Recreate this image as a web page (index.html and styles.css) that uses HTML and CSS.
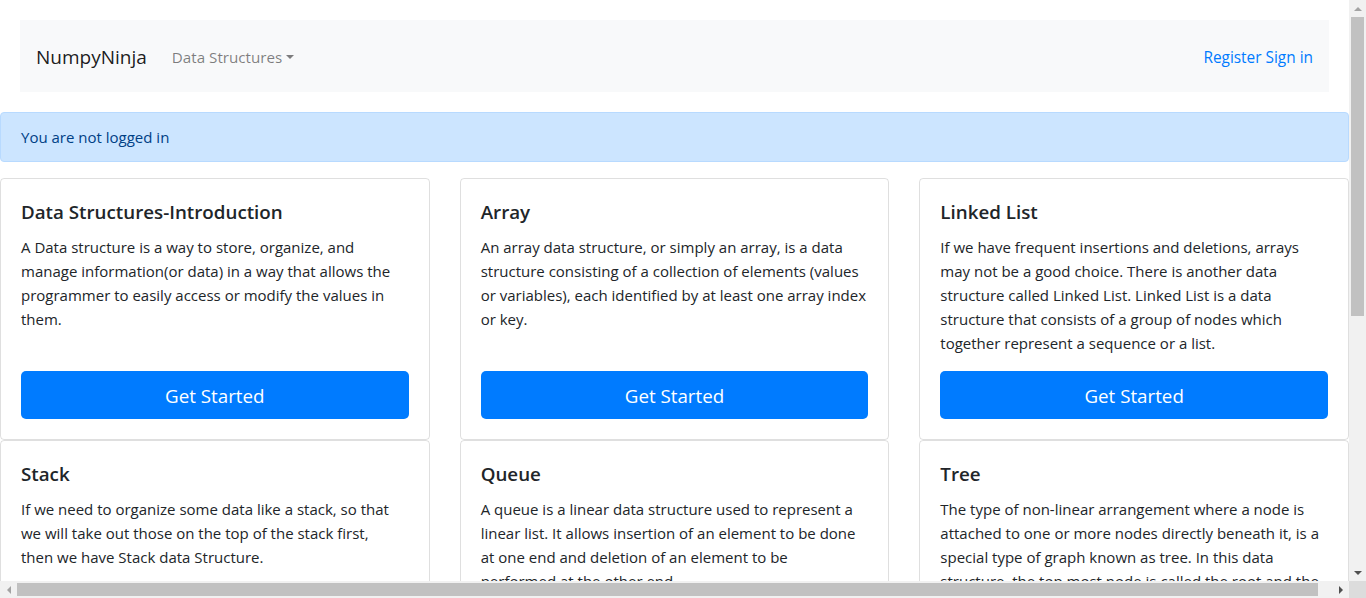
FILE: index.html
```html
<!DOCTYPE html>
<html lang="en">
<head>
<meta charset="utf-8">
<title>NumpyNinja</title>
<link rel="stylesheet" href="styles.css">
</head>
<body>
<div class="page">
  <nav class="navbar">
    <a class="brand" href="#">NumpyNinja</a>
    <a class="nav-link" href="#">Data Structures<span class="caret"></span></a>
    <div class="nav-right"><a href="#">Register</a> <a href="#">Sign in</a></div>
  </nav>

  <div class="alert">You are not logged in</div>

  <div class="grid">
    <div class="card">
      <h5>Data Structures-Introduction</h5>
      <p>A Data structure is a way to store, organize, and manage information(or data) in a way that allows the programmer to easily access or modify the values in them.</p>
      <a class="btn" href="#">Get Started</a>
    </div>
    <div class="card">
      <h5>Array</h5>
      <p>An array data structure, or simply an array, is a data structure consisting of a collection of elements (values or variables), each identified by at least one array index or key.</p>
      <a class="btn" href="#">Get Started</a>
    </div>
    <div class="card">
      <h5>Linked List</h5>
      <p>If we have frequent insertions and deletions, arrays may not be a good choice. There is another data structure called Linked List. Linked List is a data structure that consists of a group of nodes which together represent a sequence or a list.</p>
      <a class="btn" href="#">Get Started</a>
    </div>
    <div class="card">
      <h5>Stack</h5>
      <p>If we need to organize some data like a stack, so that we will take out those on the top of the stack first,<br>then we have Stack data Structure.</p>
      <a class="btn" href="#">Get Started</a>
    </div>
    <div class="card">
      <h5>Queue</h5>
      <p>A queue is a linear data structure used to represent a linear list. It allows insertion of an element to be done at one end and deletion of an element to be<br>performed at the other end.</p>
      <a class="btn" href="#">Get Started</a>
    </div>
    <div class="card">
      <h5>Tree</h5>
      <p>The type of non-linear arrangement where a node is attached to one or more nodes directly beneath it, is a special type of graph known as tree. In this data structure, the top most node is called the root and the bottom most nodes are called leaves.</p>
      <a class="btn" href="#">Get Started</a>
    </div>
  </div>
</div>

<div class="vscroll">
  <span class="arrow arrow-up"></span>
  <div class="vtrack"><div class="vthumb"></div></div>
  <span class="arrow arrow-down"></span>
</div>
<div class="hscroll">
  <span class="arrow arrow-left"></span>
  <div class="htrack"><div class="hthumb"></div></div>
  <span class="arrow arrow-right"></span>
</div>
<div class="corner"></div>
</body>
</html>
```

FILE: styles.css
```css
html, body {
  margin: 0;
  padding: 0;
}

body {
  overflow: hidden;
  font-family: "Open Sans", "Noto Sans", sans-serif;
  font-size: 15px;
  line-height: 24px;
  color: #212529;
  background: #fff;
}

a {
  text-decoration: none;
}

.page {
  width: 1349px;
}

/* navbar */
.navbar {
  margin: 20px 20px 0;
  height: 72px;
  box-sizing: border-box;
  padding: 0 16px;
  display: flex;
  align-items: center;
  background: #f8f9fa;
}

.brand {
  font-size: 19px;
  line-height: 30px;
  padding-top: 1px;
  color: rgba(0, 0, 0, 0.9);
  margin-right: 17px;
}

.nav-link {
  padding: 1px 8px 0;
  font-size: 15.2px;
  color: rgba(0, 0, 0, 0.5);
}

.caret {
  display: inline-block;
  margin-left: 4px;
  vertical-align: 4px;
  border-top: 4.5px solid rgba(0, 0, 0, 0.5);
  border-left: 4px solid transparent;
  border-right: 4px solid transparent;
}

.nav-right {
  margin-left: auto;
  padding-top: 3px;
  font-size: 15.4px;
}

.nav-right a {
  color: #007bff;
}

/* alert */
.alert {
  margin: 20px 0 16px;
  padding: 12px 20px;
  border: 1px solid #b8daff;
  border-radius: 4px;
  background: #cce5ff;
  color: #004085;
}

/* cards */
.grid {
  display: grid;
  grid-template-columns: repeat(3, 1fr);
  column-gap: 30px;
}

.card {
  display: flex;
  flex-direction: column;
  padding: 20px;
  border: 1px solid rgba(0, 0, 0, 0.125);
  border-radius: 4px;
}

.card h5 {
  margin: 0 0 11px;
  padding-top: 1px;
  font-size: 18.75px;
  line-height: 24px;
  font-weight: 600;
}

.card p {
  margin: 0 0 16px;
}

.btn {
  margin-top: auto;
  display: block;
  height: 48px;
  box-sizing: border-box;
  padding-top: 1px;
  line-height: 47px;
  text-align: center;
  font-size: 18.75px;
  color: #fff;
  background: #007bff;
  border-radius: 5px;
}

/* fake scrollbars */
.vscroll {
  position: fixed;
  top: 0;
  right: 0;
  width: 17px;
  height: 581px;
  background: #f1f1f1;
  display: flex;
  flex-direction: column;
}

.vtrack {
  flex: 1;
  padding: 0 2px;
}

.vthumb {
  height: 299px;
  background: #c1c1c1;
}

.hscroll {
  position: fixed;
  left: 0;
  bottom: 0;
  width: 1349px;
  height: 17px;
  background: #f1f1f1;
  display: flex;
  align-items: center;
}

.htrack {
  flex: 1;
  height: 13px;
}

.hthumb {
  width: 1301px;
  height: 13px;
  background: #c1c1c1;
}

.corner {
  position: fixed;
  right: 0;
  bottom: 0;
  width: 17px;
  height: 17px;
  background: #dcdcdc;
}

.arrow {
  width: 17px;
  height: 17px;
  flex: none;
  display: flex;
  align-items: center;
  justify-content: center;
  box-sizing: border-box;
}

.arrow::before {
  content: "";
  display: block;
}

.arrow-up::before {
  border-bottom: 4px solid #a3a3a3;
  border-left: 4px solid transparent;
  border-right: 4px solid transparent;
}

.arrow-down::before {
  border-top: 4px solid #505050;
  border-left: 4px solid transparent;
  border-right: 4px solid transparent;
}

.arrow-left::before {
  border-right: 4px solid #a3a3a3;
  border-top: 4px solid transparent;
  border-bottom: 4px solid transparent;
}

.arrow-right::before {
  border-left: 4px solid #505050;
  border-top: 4px solid transparent;
  border-bottom: 4px solid transparent;
}
```
